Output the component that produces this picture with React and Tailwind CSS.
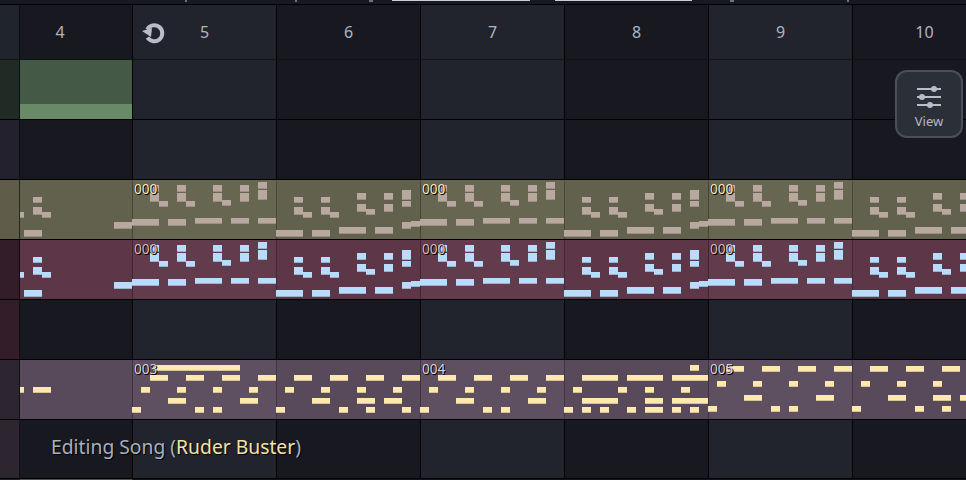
import React from "react";

const BARS = [5, 6, 7, 8, 9, 10];
const STARTS = [132, 420, 708];

// pattern notes: [x from pattern start, y, width, height]
const PATTERN = [
  [18, 5, 9, 7], [18, 13, 9, 9], [27, 21, 9, 6],
  [45, 5, 9, 7], [45, 13, 9, 9], [54, 21, 9, 6],
  [81, 5, 9, 7], [81, 13, 9, 9], [90, 20, 9, 6],
  [108, 5, 9, 7], [108, 13, 9, 9],
  [126, 2, 9, 7], [126, 10, 9, 10],
  [0, 39, 27, 7], [36, 39, 18, 7], [63, 38, 27, 6], [99, 38, 18, 6], [126, 38, 18, 6],
  [144, 50, 27, 7], [180, 50, 18, 7], [207, 47, 27, 7], [243, 47, 18, 7], [270, 42, 9, 7], [279, 41, 9, 6],
  [162, 17, 9, 6], [162, 27, 9, 8], [171, 32, 9, 6],
  [189, 17, 9, 6], [189, 27, 9, 8], [198, 32, 9, 6],
  [225, 13, 9, 7], [225, 24, 9, 8], [234, 29, 9, 6],
  [252, 13, 9, 7], [252, 24, 9, 8],
  [270, 10, 9, 10], [270, 21, 9, 6],
];
const INTRO = [
  [20, 32, 4, 6], [33, 17, 9, 6], [33, 27, 9, 8], [42, 32, 9, 6], [24, 50, 18, 7], [114, 42, 18, 7],
];
const repeated = [
  ...INTRO,
  ...STARTS.flatMap((s) => PATTERN.map(([x, y, w, h]) => [x + s, y, w, h])),
];

const row = (y, h, list) => list.map(([x, w]) => [x, y, w, h]);
const LEAD = [
  ...row(5, 6, [[153, 87]]),
  ...row(15, 6, [[150, 18], [186, 18], [222, 18], [258, 18], [294, 18], [330, 18], [366, 18], [402, 18], [438, 18], [474, 18], [510, 18], [546, 18], [582, 36], [627, 36], [672, 36]]),
  ...row(27, 6, [[20, 4], [33, 18], [141, 9], [177, 9], [213, 9], [249, 9], [285, 9], [321, 9], [357, 9], [393, 9], [429, 9], [465, 9], [501, 9], [537, 9], [573, 9], [618, 9], [645, 9], [681, 9]]),
  ...row(38, 6, [[168, 18], [240, 18], [312, 18], [357, 18], [384, 18], [456, 18], [528, 18], [582, 36], [645, 18], [672, 36]]),
  ...row(47, 6, [[132, 9], [195, 9], [213, 9], [276, 9], [339, 9], [366, 9], [402, 9], [420, 9], [483, 9], [501, 9], [564, 9], [582, 9], [600, 9], [627, 9], [645, 18], [672, 9], [690, 9]]),
  ...row(5, 6, [[690, 9]]),
  ...row(6, 6, [[726, 18], [762, 18], [798, 18], [834, 18], [870, 18], [906, 18], [942, 18]]),
  ...row(21, 6, [[717, 9], [753, 9], [789, 9], [825, 9], [861, 9], [897, 9], [933, 9]]),
  ...row(35, 6, [[744, 18], [816, 18], [888, 18], [933, 18], [960, 18]]),
  ...row(46, 6, [[708, 9], [771, 9], [789, 9], [852, 9], [915, 9], [942, 9]]),
];

function Notes({ notes, fill, edge }) {
  return (
    <svg width="966" height="60" className="absolute left-0 top-0 block">
      {notes.map(([x, y, w, h], i) => (
        <g key={i}>
          <rect x={x} y={y} width={w} height={h} fill={edge} />
          <rect x={x} y={y} width={w} height={h - 1} fill={fill} />
        </g>
      ))}
    </svg>
  );
}

function PatternLabel({ x, text, color }) {
  return (
    <span
      className={`absolute top-0 font-['Noto_Sans',sans-serif] text-[13.5px] leading-[18px] [text-shadow:1px_1px_0_#000,-1px_0_0_rgba(0,0,0,0.35)] ${color}`}
      style={{ left: x }}
    >
      {text}
    </span>
  );
}

function Grid({ side, first, light, dark, line = "border-black" }) {
  return (
    <>
      <div className={`w-[20px] flex-none border-r border-black/60 ${side}`} />
      <div className={`w-[113px] flex-none border-r ${line} ${first}`} />
      {BARS.map((b, i) => (
        <div key={b} className={`w-[144px] flex-none border-r ${line} ${i % 2 === 0 ? light : dark}`} />
      ))}
    </>
  );
}

function Row({ h = "h-[60px]", children, ...grid }) {
  return (
    <div className={`relative flex flex-none ${h} border-b border-black`}>
      <Grid {...grid} />
      {children}
    </div>
  );
}

const EMPTY = { light: "bg-[#21242d]", dark: "bg-[#181920]", first: "bg-[#181920]" };

function Track({ side, light, dark, first, notes, fill, edge, labels, color }) {
  return (
    <Row side={side} light={light} dark={dark} first={first} line="border-black/30">
      <Notes notes={notes} fill={fill} edge={edge} />
      {labels.map((t, i) => (
        <PatternLabel key={i} x={STARTS[i] + 2} text={t} color={color} />
      ))}
    </Row>
  );
}

export default function App() {
  return (
    <div className="relative flex h-[480px] w-[966px] flex-col overflow-hidden bg-[#14161d] font-['Noto_Sans',sans-serif]">
      {/* sliver of the bar above */}
      <div className="relative h-[5px] flex-none border-b border-black bg-[#171922]">
        <div className="absolute left-[392px] top-0 h-[1px] w-[138px] bg-[#c9ccd4]" />
        <div className="absolute left-[555px] top-0 h-[1px] w-[137px] bg-[#c9ccd4]" />
        <div className="absolute left-[185px] top-0 h-[2px] w-[2px] bg-[#6f737d]" />
        <div className="absolute left-[295px] top-0 h-[2px] w-[2px] bg-[#6f737d]" />
        <div className="absolute left-[369px] top-0 h-[2px] w-[4px] bg-[#6f737d]" />
        <div className="absolute left-[730px] top-0 h-[2px] w-[4px] bg-[#6f737d]" />
        <div className="absolute left-[847px] top-0 h-[2px] w-[2px] bg-[#6f737d]" />
      </div>

      {/* ruler */}
      <div className="relative flex h-[55px] flex-none border-b border-[#101218]">
        <div className="w-[20px] flex-none border-r border-black/60 bg-[#20242c]" />
        <div className="flex w-[113px] flex-none items-center justify-center border-r border-black bg-[#181920] pr-[32px] text-[16px] text-[#b0b5c0]">
          4
        </div>
        {BARS.map((b, i) => (
          <div
            key={b}
            className={`flex w-[144px] flex-none items-center justify-center border-r border-black text-[16px] text-[#b0b5c0] ${
              i % 2 === 0 ? "bg-[#21242d]" : "bg-[#181920]"
            }`}
          >
            {b}
          </div>
        ))}
        <svg width="26" height="26" viewBox="0 0 26 26" className="absolute left-[140px] top-[14px]">
          <path d="M7.2 10.5A8 8 0 1 1 7.5 18.5" fill="none" stroke="#b9bdc9" strokeWidth="4" />
          <polygon points="2,12 12,9 11,18" fill="#b9bdc9" />
        </svg>
      </div>

      {/* empty track with the green clip */}
      <Row {...EMPTY} side="bg-[#212b25]" first="bg-[#445a46]">
        <div className="absolute bottom-0 left-[20px] h-[15px] w-[112px] bg-[#688a66]" />
      </Row>

      <Row {...EMPTY} side="bg-[#22212d]" />

      <Track
        side="bg-[#5f5d4a]"
        first="bg-[#62614d]"
        light="bg-[#676651]"
        dark="bg-[#62614d]"
        notes={repeated}
        fill="#b9a8a0"
        edge="#9c9186"
        labels={["000", "000", "000"]}
        color="text-[#f5e8b8]"
      />

      <Track
        side="bg-[#331d28]"
        first="bg-[#5d3747]"
        light="bg-[#623b4c]"
        dark="bg-[#5d3747]"
        notes={repeated}
        fill="#b8dcfb"
        edge="#98b4cc"
        labels={["000", "000", "000"]}
        color="text-[#dcb8b8]"
      />

      <Row {...EMPTY} side="bg-[#331d28]" />

      <Track
        side="bg-[#2d2530]"
        first="bg-[#584a5b]"
        light="bg-[#5e4f61]"
        dark="bg-[#584a5b]"
        notes={LEAD}
        fill="#fde8ad"
        edge="#d6c396"
        labels={["003", "004", "005"]}
        color="text-[#d5d2de]"
      />

      <Row {...EMPTY} h="h-[59px]" side="bg-[#2d2530]" />

      <div className="flex h-[2px] flex-none">
        <div className="w-[20px] flex-none bg-[#20242c]" />
        <div className="w-[112px] flex-none bg-[#565541]" />
      </div>

      {/* status text over the grid */}
      <div className="absolute left-[51px] top-[433px] text-[19.3px] leading-[28px] text-[#a9b0bd] [text-shadow:1px_1px_0_#000]">
        Editing Song (<span className="text-[#f7e2a8]">Ruder Buster</span>)
      </div>

      {/* floating view button */}
      <div className="absolute left-[895px] top-[70px] flex h-[68px] w-[68px] flex-col items-center rounded-[12px] border-2 border-[#4b4f5c] bg-[#2b2f38] pt-[13px]">
        <svg width="26" height="24" viewBox="0 0 26 24" className="block">
          <g stroke="#b9bdc9" strokeWidth="2" fill="#b9bdc9">
            <line x1="1" y1="4" x2="25" y2="4" />
            <line x1="1" y1="12" x2="25" y2="12" />
            <line x1="1" y1="20" x2="25" y2="20" />
          </g>
          <g fill="#b9bdc9">
            <circle cx="18" cy="4" r="3" />
            <circle cx="6" cy="12" r="3" />
            <circle cx="14" cy="20" r="3" />
          </g>
        </svg>
        <span className="mt-[3px] text-[13px] leading-[18px] text-[#b5b9c4]">View</span>
      </div>
    </div>
  );
}
